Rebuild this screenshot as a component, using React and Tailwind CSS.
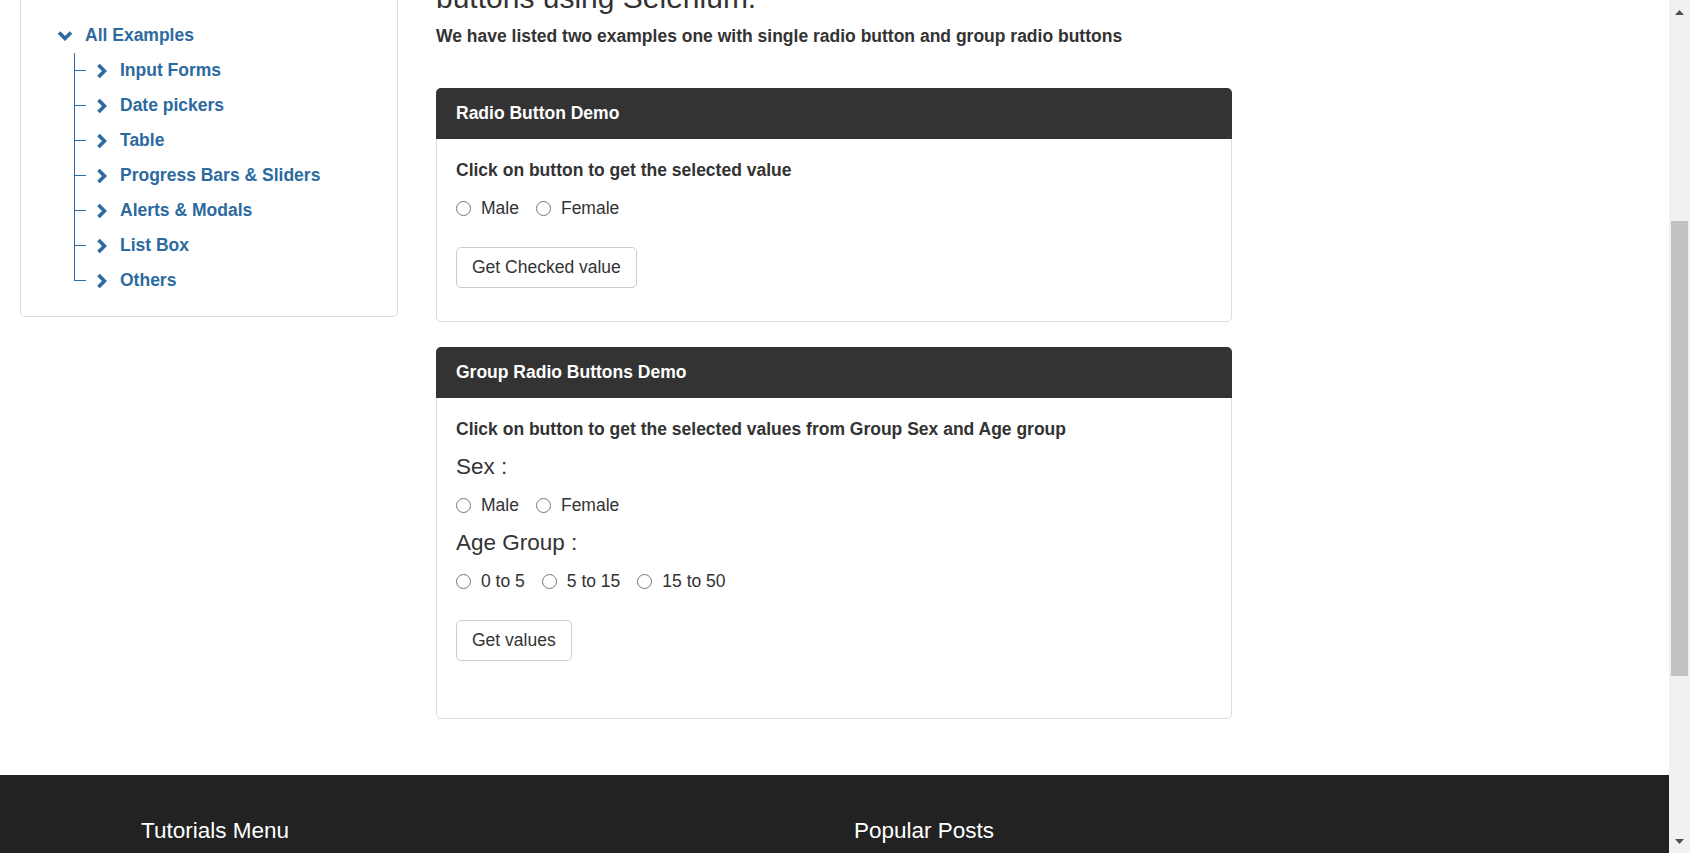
import React from "react";

const menuItems = [
  "Input Forms",
  "Date pickers",
  "Table",
  "Progress Bars & Sliders",
  "Alerts & Modals",
  "List Box",
  "Others",
];

function ChevronRight() {
  return (
    <svg width="11" height="16" viewBox="0 0 11 16" className="shrink-0">
      <path d="M2.5 2 L8.5 8 L2.5 14" fill="none" stroke="#2c6aa0" strokeWidth="3.6" />
    </svg>
  );
}

function ChevronDown() {
  return (
    <svg width="16" height="11" viewBox="0 0 16 11" className="shrink-0">
      <path d="M2 2.5 L8 8.5 L14 2.5" fill="none" stroke="#2c6aa0" strokeWidth="3.6" />
    </svg>
  );
}

function Radio({ label, name }) {
  return (
    <label className="flex items-center gap-[10px]">
      <input
        type="radio"
        name={name}
        className="m-0 h-[15px] w-[15px] appearance-none rounded-full border border-[#777] bg-white"
      />
      <span>{label}</span>
    </label>
  );
}

function Panel({ title, children }) {
  return (
    <div className="rounded-[5px] border border-[#ddd] bg-white">
      <div className="-mx-px -mt-px rounded-t-[5px] bg-[#333] px-[20px] py-[13px] text-[17.5px] font-bold leading-[25px] text-white">
        {title}
      </div>
      <div className="px-[19px] pt-[19px]">{children}</div>
    </div>
  );
}

function Button({ children }) {
  return (
    <button className="flex h-[41px] items-center rounded-[5px] border border-[#ccc] bg-white px-[15px] text-[17.5px] text-[#333]">
      {children}
    </button>
  );
}

function Sidebar() {
  return (
    <aside className="h-[317px] w-[378px] shrink-0 rounded-b-[5px] border border-t-0 border-[#ddd] pt-[18px] text-[17.5px] font-bold text-[#2c6aa0]">
      <div className="flex h-[35px] items-center gap-[12px] pl-[36px]">
        <ChevronDown />
        <span>All Examples</span>
      </div>
      <ul className="pl-[53px]">
        {menuItems.map((item, i) => (
          <li key={item} className="flex h-[35px] items-center">
            <div className="flex h-full w-[12px] flex-col">
              <div className="h-[17.5px] border-b border-l border-[#2c6aa0]" />
              <div className={i === menuItems.length - 1 ? "flex-1" : "flex-1 border-l border-[#2c6aa0]"} />
            </div>
            <div className="ml-[10px] flex items-center gap-[13px]">
              <ChevronRight />
              <span>{item}</span>
            </div>
          </li>
        ))}
      </ul>
    </aside>
  );
}

export default function App() {
  return (
    <div className="flex h-[853px] w-[1690px] overflow-hidden bg-white font-['Liberation_Sans',Arial,sans-serif] text-[#333]">
      <div className="flex w-[1669px] flex-col">
        <div className="flex h-[775px] shrink-0 gap-[38px] pl-[20px]">
          <Sidebar />

          <main className="flex w-[796px] flex-col">
            <h2 className="mt-[-19px] text-[30px] leading-[33px]">buttons using Selenium.</h2>
            <p className="mt-[10px] text-[17.5px] font-bold leading-[25px]">
              We have listed two examples one with single radio button and group radio buttons
            </p>

            <div className="mt-[39px]">
              <Panel title="Radio Button Demo">
                <p className="text-[17.5px] font-bold leading-[25px]">Click on button to get the selected value</p>
                <div className="mt-[13px] flex h-[25px] items-center gap-[17px] text-[17.5px]">
                  <Radio label="Male" name="single" />
                  <Radio label="Female" name="single" />
                </div>
                <div className="mt-[26px] pb-[33px]">
                  <Button>Get Checked value</Button>
                </div>
              </Panel>
            </div>

            <div className="mt-[25px]">
              <Panel title="Group Radio Buttons Demo">
                <p className="text-[17.5px] font-bold leading-[25px]">
                  Click on button to get the selected values from Group Sex and Age group
                </p>
                <div className="mt-[11px] text-[22.5px] leading-[27px]">Sex :</div>
                <div className="mt-[13px] flex h-[25px] items-center gap-[17px] text-[17.5px]">
                  <Radio label="Male" name="sex" />
                  <Radio label="Female" name="sex" />
                </div>
                <div className="mt-[11px] text-[22.5px] leading-[27px]">Age Group :</div>
                <div className="mt-[13px] flex h-[25px] items-center gap-[17px] text-[17.5px]">
                  <Radio label="0 to 5" name="age" />
                  <Radio label="5 to 15" name="age" />
                  <Radio label="15 to 50" name="age" />
                </div>
                <div className="mt-[26px] pb-[57px]">
                  <Button>Get values</Button>
                </div>
              </Panel>
            </div>
          </main>
        </div>

        <footer className="flex flex-1 bg-[#222] pl-[141px] pt-[43px] text-[22.5px] leading-[25px] text-white">
          <h3 className="w-[713px]">Tutorials Menu</h3>
          <h3>Popular Posts</h3>
        </footer>
      </div>

      {/* fake scrollbar */}
      <div className="flex w-[21px] shrink-0 flex-col bg-[#f1f1f1]">
        <div className="flex h-[24px] items-center justify-center">
          <svg width="9" height="5" viewBox="0 0 9 5">
            <path d="M0 5 L4.5 0 L9 5 Z" fill="#505050" />
          </svg>
        </div>
        <div className="mx-[2px] mt-[197px] h-[455px] bg-[#c1c1c1]" />
        <div className="flex-1" />
        <div className="flex h-[24px] items-center justify-center">
          <svg width="9" height="5" viewBox="0 0 9 5">
            <path d="M0 0 L9 0 L4.5 5 Z" fill="#505050" />
          </svg>
        </div>
      </div>
    </div>
  );
}
